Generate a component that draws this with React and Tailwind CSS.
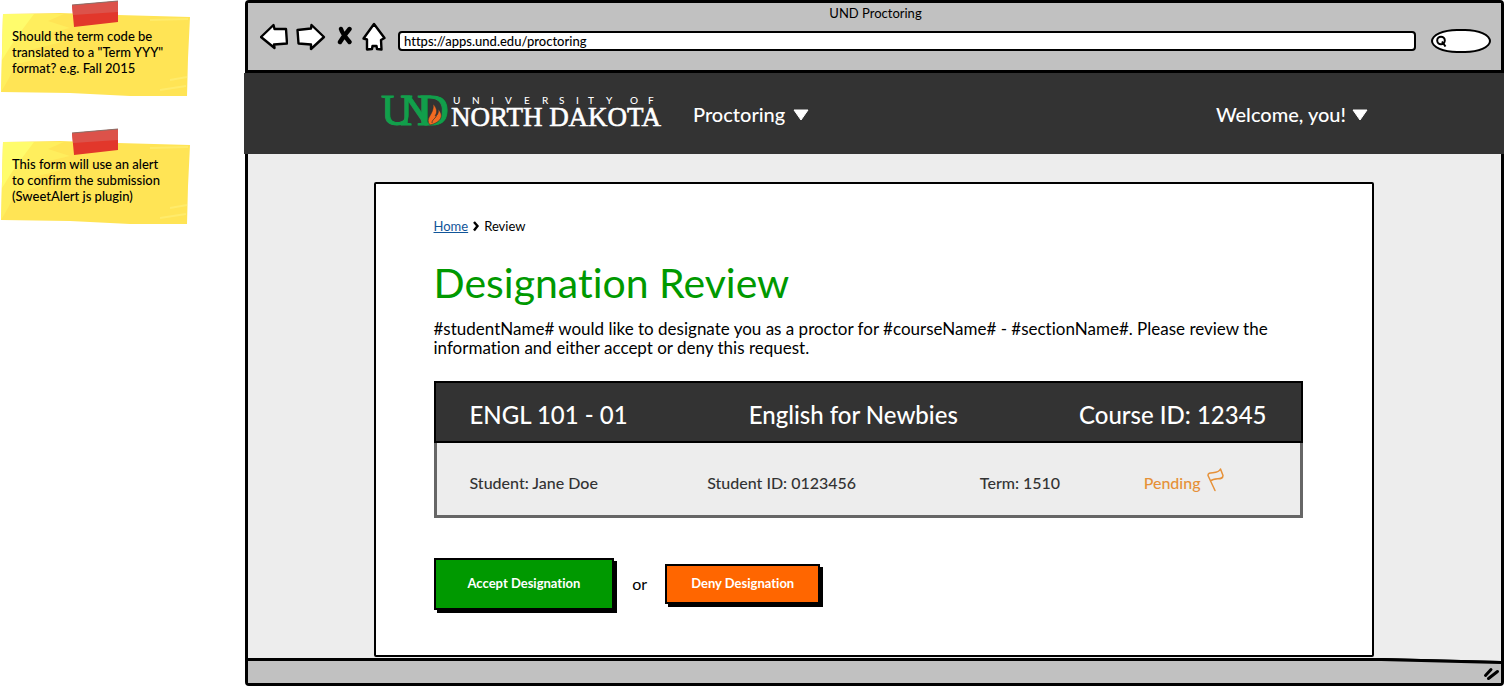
const notes = [
  { id: 'term', lines: ['Should the term code be', 'translated to a "Term YYY"', 'format? e.g. Fall 2015'] },
  { id: 'alert', lines: ['This form will use an alert', 'to confirm the submission', '(SweetAlert js plugin)'] },
];

function StickyNote({ lines }) {
  return (
    <li className="relative h-24 w-[190px] pt-7 pl-3">
      <svg className="absolute inset-0 h-full w-full" viewBox="0 0 190 96" preserveAspectRatio="none" aria-hidden="true">
        <path d="M3 14 L60 13 L118 15 L190 17 L188 58 L187 96 L130 96 L70 93 L1 92Z" fill="#ffe455" />
        <path d="M3 14 L64 14 L48 21 L70 28 L40 35 L62 42 L30 50 L44 58 L16 64 L8 80 L1 92Z" fill="#fff363" opacity=".65" />
        <path d="M3 14 L34 14 L22 30 L12 44 L2 60Z" fill="#ffff70" opacity=".8" />
        <path d="M170 80 L187 77 M150 20 L188 19 M160 90 L186 86" stroke="#fff07a" strokeWidth="2" opacity=".6" />
        <path d="M72 5 L118 1 L118 22 L74 27Z" fill="#e2372b" />
        <path d="M72 5 L118 1 L118 12 L73 15Z" fill="#dc524a" />
        <path d="M72 5 L118 1" stroke="#8b7069" strokeWidth="1" />
      </svg>
      <p className="relative text-[13px] leading-4 font-medium whitespace-nowrap">
        {lines.map((line) => (
          <span key={line} className="block">{line}</span>
        ))}
      </p>
    </li>
  );
}

const ink = { stroke: '#000', strokeWidth: 2.4, strokeLinejoin: 'round', strokeLinecap: 'round', fill: '#fff' };

function Caret() {
  return (
    <svg className="mt-0.5 h-3 w-4" viewBox="0 0 16 12" aria-hidden="true">
      <path d="M1 1 H15 L8 11Z" fill="#fff" stroke="#fff" strokeLinejoin="round" />
    </svg>
  );
}

function Logo() {
  return (
    <svg className="h-10 w-[280px] shrink-0 overflow-visible" viewBox="0 0 280 40" role="img" aria-label="UND University of North Dakota">
      <g fontFamily="Liberation Serif, serif">
        <g fontSize="44" fill="#119f4b" stroke="#119f4b" strokeWidth="1">
          <text x="0" y="31">U</text>
          <text x="19" y="31">N</text>
          <text x="36" y="31">D</text>
        </g>
        <path d="M52 10 C57 15 56 19 54 22 C57 21 58 18 57 15 C63 21 61 28 49 31 C43 24 54 20 52 10Z" fill="#f26a21" stroke="#333" strokeWidth=".6" />
        <path d="M51 29 C51 25 55 25 56 20" fill="none" stroke="#333" strokeWidth=".8" />
        <text x="70" y="32" fontSize="27" fill="#fff" stroke="#fff" strokeWidth=".6">NORTH DAKOTA</text>
      </g>
      <g fontFamily="Lato, sans-serif" fontSize="10" fontWeight="500" fill="#fff">
        <text x="72 91 110 124 143 161 178 195 207 225 249 267" y="10">UNIVERSITYOF</text>
      </g>
    </svg>
  );
}

export default function App() {
  return (
    <div className="flex min-h-screen bg-white pb-px font-['Lato',sans-serif] text-black [font-variant-ligatures:none]">
      <aside className="w-[245px] shrink-0">
        <ul className="flex flex-col gap-8">
          {notes.map((note) => (
            <StickyNote key={note.id} lines={note.lines} />
          ))}
        </ul>
      </aside>

      <div className="flex min-w-0 flex-1 flex-col rounded-sm border-3 border-black bg-[#ededed]">
        <div className="border-b-3 border-black bg-[#c1c1c1] pt-0.5 pr-2.5 pb-[11px] pl-3">
          <div className="text-center text-[13px] leading-4">UND Proctoring</div>
          <div className="mt-0.5 flex h-9 items-center">
            <div className="flex gap-2 self-start">
              <button type="button" aria-label="Back" className="h-7 w-7">
                <svg viewBox="0 0 28 28" className="h-7 w-7"><path {...ink} d="M1 14 L13.500 2 L14.500 6 L26 6 L27 20.500 L14 21.500 L14.500 25Z" /></svg>
              </button>
              <button type="button" aria-label="Forward" className="h-7 w-7">
                <svg viewBox="0 0 28 28" className="h-7 w-7 overflow-visible"><path {...ink} d="M1.500 7 L15 5.500 L15.500 2 L28 14 L15 26 L15 21.500 L2.500 20.500Z" /></svg>
              </button>
              <button type="button" aria-label="Stop" className="h-7 w-5">
                <svg viewBox="0 0 20 28" className="h-7 w-5"><path d="M9 6 C10 10 15 16 17.500 19 M17.500 6 C15 9 11 14 8 19" fill="none" stroke="#000" strokeWidth="4.400" strokeLinecap="round" /></svg>
              </button>
              <button type="button" aria-label="Home" className="h-7 w-6">
                <svg viewBox="0 0 24 28" className="h-7 w-6 overflow-visible"><path {...ink} d="M14 1 L24.500 15 L21 17 L21.500 26.500 L17 26 L16.500 23 L12.500 23 L12 26 L7 26.500 L7 16.500 L3.500 15.500Z" /></svg>
              </button>
            </div>
            <input aria-label="Address" defaultValue="https://apps.und.edu/proctoring" className="ml-3.5 h-5 min-w-0 flex-1 rounded-sm border-2 border-black bg-white px-1 text-[13px] font-medium" />
            <label className="ml-[15px] flex h-6 w-[60px] items-center rounded-[26px/12px] border-2 border-black bg-white pl-0.5">
              <svg viewBox="0 0 12 12" className="h-3 w-3 shrink-0" fill="none" stroke="#000" strokeWidth="2"><circle cx="6" cy="5.500" r="3.800" /><path d="M7 6.500 L10.500 11.500" /></svg>
              <input aria-label="Search" className="w-8 min-w-0 bg-transparent outline-none" />
            </label>
          </div>
        </div>

        <header className="-mr-[3px] -ml-1 bg-[#333] text-white">
          <div className="mx-auto flex h-[81px] max-w-[1000px] items-center pr-1.5 pl-[7px] text-xl font-medium">
            <Logo />
            <button type="button" className="ml-8 flex items-center gap-2">Proctoring <Caret /></button>
            <button type="button" className="ml-auto flex items-center gap-1.5">Welcome, you! <Caret /></button>
          </div>
        </header>

        <main className="flex flex-1 flex-col pt-7 pr-[26px] pb-px pl-6">
          <div className="mx-auto w-full max-w-[1000px] flex-1 rounded-xs border-2 border-black bg-white pt-[34px] pr-[69px] pb-10 pl-[58px]">
            <nav aria-label="Breadcrumb" className="flex items-center gap-0.5 text-[13px] leading-4">
              <a href="#home" className="text-[#115599] underline">Home</a>
              <svg viewBox="0 0 12 12" className="h-3 w-3" aria-hidden="true"><path d="M4 2 L7.500 6 L4 10.500" fill="none" stroke="#000" strokeWidth="2.400" /></svg>
              <span>Review</span>
            </nav>
            <h1 className="mt-6 text-[41px] leading-[50px] text-[#009900]">Designation Review</h1>
            <p className="mt-[11px] text-[17px] leading-[19px]">
              #studentName# would like to designate you as a proctor for #courseName# - #sectionName#. Please review the information and either accept or deny this request.
            </p>

            <section className="mt-6">
              <div className="flex h-[62px] items-center justify-between border-2 border-black bg-[#333] px-[34px] pt-1.5 text-2xl font-medium text-white">
                <h2>ENGL 101 - 01</h2>
                <div>English for Newbies</div>
                <div>Course ID: 12345</div>
              </div>
              <div className="grid h-[75px] grid-cols-[238fr_273fr_164fr_123fr] items-center border-3 border-t-0 border-[#666] bg-[#ededed] px-[33px] pt-2 text-base font-medium text-[#333]">
                <div>Student: Jane Doe</div>
                <div>Student ID: 0123456</div>
                <div>Term: 1510</div>
                <div className="flex items-center gap-1.5 text-[#e69138]">
                  Pending
                  <svg viewBox="0 0 17 24" className="mb-1.5 h-6 w-[17px]" aria-hidden="true"><path d="M8 22.500 L1 7.500 C0.500 2.500 11 7 13.500 1 L16 7.500 C16 13 8 9 3.500 13" fill="none" stroke="#e69138" strokeWidth="1.500" strokeLinecap="round" strokeLinejoin="round" /></svg>
                </div>
              </div>
            </section>

            <div className="mt-10 flex items-center gap-[18px]">
              <button type="button" className="h-[52px] border-2 border-black bg-[#009900] px-8 text-[13px] font-bold text-white shadow-[3px_3px_0_#000]">Accept Designation</button>
              <span>or</span>
              <button type="button" className="h-10 border-2 border-black bg-[#ff6600] px-6 text-[13px] font-bold text-white shadow-[3px_3px_0_#000]">Deny Designation</button>
            </div>
          </div>
        </main>

        <footer className="relative flex h-[25px] items-center justify-end border-t-3 border-black bg-[#c1c1c1]">
          <svg viewBox="0 0 120 6" preserveAspectRatio="none" className="absolute -top-[3px] right-0 h-1.5 w-[120px]" aria-hidden="true">
            <path d="M0 0 H120 V3 Z" fill="#ededed" />
            <path d="M0 0 L120 3 V6 L0 3Z" fill="#000" />
          </svg>
          <svg viewBox="0 0 18 16" className="mt-1 h-4 w-[18px]" aria-hidden="true"><path d="M2.500 9.500 L8 3.500 M5.500 12.500 L14.500 5.500" stroke="#000" strokeWidth="3" strokeLinecap="round" /></svg>
        </footer>
      </div>
    </div>
  );
}
